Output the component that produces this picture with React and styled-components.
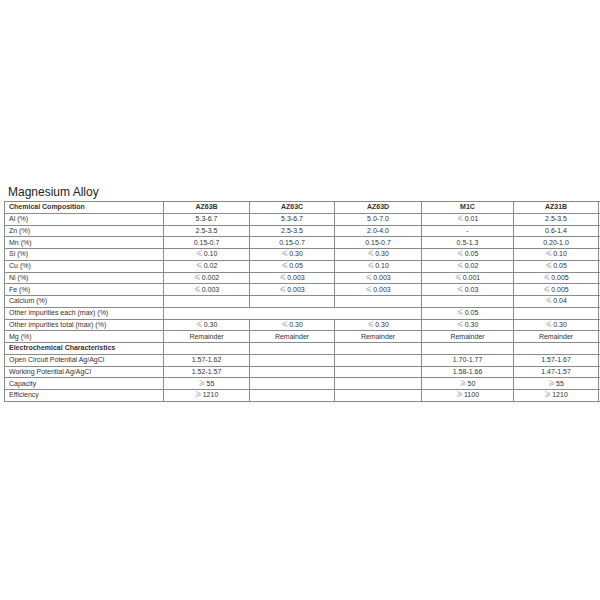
import React from 'react';
import styled, { createGlobalStyle } from 'styled-components';

const GlobalStyle = createGlobalStyle`
    html, body { margin:0; padding:0; background:#fff; overflow:hidden; }
    body { font-family:"Liberation Sans", Arial, sans-serif; color:#222; }
`;

const Page = styled.div`
    width:600px;
    height:600px;
    overflow:hidden;
    padding:185px 0 0 4px;
    box-sizing:border-box;
`;

const Title = styled.h2`
    margin:0 0 2px 4px;
    font-size:12px;
    line-height:14px;
    font-weight:normal;
    color:#222;
`;

const Table = styled.table`
    border-collapse:collapse;
    table-layout:fixed;
    width:674px;
    font-size:7px;
    color:#333;
`;

const Row = styled.tr`
    height:11.75px;
`;

const Cell = styled.td`
    border:1px solid #8a8a8a;
    padding:0 4px;
    height:10.75px;
    line-height:10px;
    white-space:nowrap;
    overflow:hidden;
    text-align:${p => p.$label ? 'left' : 'center'};
    font-weight:${p => p.$bold ? 'bold' : 'normal'};
`;

const Sym = styled.span`
    color:#999;
    font-family:"Noto Sans CJK SC", "Liberation Sans", sans-serif;
    line-height:0;
    margin-right:1px;
`;

const cols = [159, 86, 85, 87, 92, 85, 80];

const rows = [
    ['Al (%)', '5.3-6.7', '5.3-6.7', '5.0-7.0', '≤0.01', '2.5-3.5'],
    ['Zn (%)', '2.5-3.5', '2.5-3.5', '2.0-4.0', '-', '0.6-1.4'],
    ['Mn (%)', '0.15-0.7', '0.15-0.7', '0.15-0.7', '0.5-1.3', '0.20-1.0'],
    ['Si (%)', '≤0.10', '≤0.30', '≤0.30', '≤0.05', '≤0.10'],
    ['Cu (%)', '≤0.02', '≤0.05', '≤0.10', '≤0.02', '≤0.05'],
    ['Ni (%)', '≤0.002', '≤0.003', '≤0.003', '≤0.001', '≤0.005'],
    ['Fe (%)', '≤0.003', '≤0.003', '≤0.003', '≤0.03', '≤0.005'],
    ['Calcium (%)', '', '', '', '', '≤0.04'],
];

const rows2 = [
    ['Other impurities total (max) (%)', '≤0.30', '≤0.30', '≤0.30', '≤0.30', '≤0.30'],
    ['Mg (%)', 'Remainder', 'Remainder', 'Remainder', 'Remainder', 'Remainder'],
];

const electro = [
    ['Open Circuit Potential Ag/AgCl', '1.57-1.62', '', '', '1.70-1.77', '1.57-1.67'],
    ['Working Potential Ag/AgCl', '1.52-1.57', '', '', '1.58-1.66', '1.47-1.57'],
    ['Capacity', '≥55', '', '', '≥50', '≥55'],
    ['Efficiency', '≥1210', '', '', '≥1100', '≥1210'],
];

// split a leading ≤ / ≥ off so it can take the lighter symbol style
const Value = ({ v }) => {
    if (v[0] === '≤' || v[0] === '≥') {
        return <><Sym>{v[0]}</Sym>{v.slice(1)}</>;
    }
    return v;
};

const DataRow = ({ r }) => (
    <Row>
        <Cell $label>{r[0]}</Cell>
        {r.slice(1).map((v, i) => <Cell key={i}><Value v={v} /></Cell>)}
        <Cell />
    </Row>
);

const App = () => {
    return (
        <Page>
            <GlobalStyle />
            <Title>Magnesium Alloy</Title>
            <Table>
                <colgroup>
                    {cols.map((w, i) => <col key={i} style={{ width: w }} />)}
                </colgroup>
                <tbody>
                    <Row>
                        <Cell $label $bold>Chemical Composition</Cell>
                        <Cell $bold>AZ63B</Cell>
                        <Cell $bold>AZ63C</Cell>
                        <Cell $bold>AZ63D</Cell>
                        <Cell $bold>M1C</Cell>
                        <Cell $bold>AZ31B</Cell>
                        <Cell />
                    </Row>
                    {rows.map((r, i) => <DataRow key={i} r={r} />)}
                    <Row>
                        <Cell $label>Other impurities each (max) (%)</Cell>
                        <Cell colSpan={3} />
                        <Cell><Value v="≤0.05" /></Cell>
                        <Cell />
                        <Cell />
                    </Row>
                    {rows2.map((r, i) => <DataRow key={i} r={r} />)}
                    <Row>
                        <Cell $label $bold>Electrochemical Characteristics</Cell>
                        <Cell /><Cell /><Cell /><Cell /><Cell /><Cell />
                    </Row>
                    {electro.map((r, i) => <DataRow key={i} r={r} />)}
                </tbody>
            </Table>
        </Page>
    );
};

export default App;
